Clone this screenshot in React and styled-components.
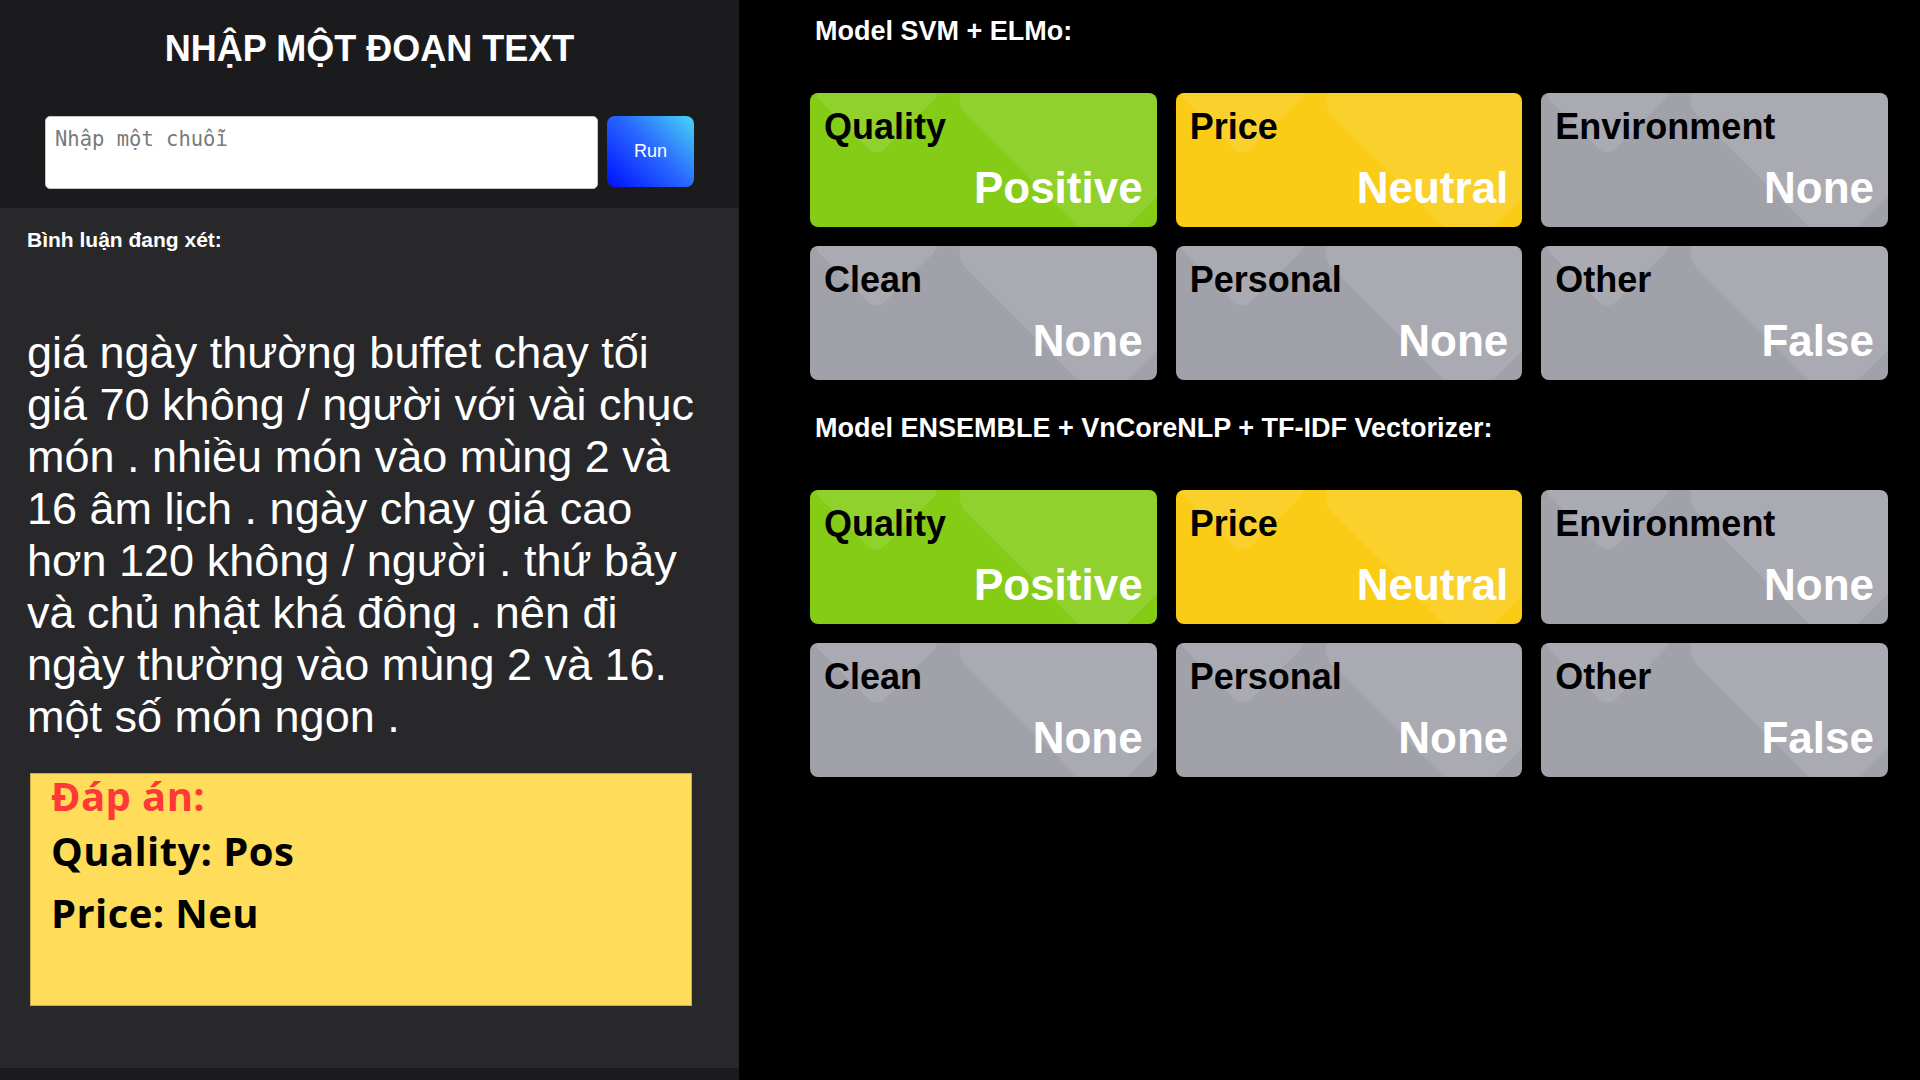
import React from "react";
import styled, { createGlobalStyle } from "styled-components";

const GlobalStyle = createGlobalStyle`
  body {
    margin: 0;
    background: #000;
    font-family: "Liberation Sans", Arial, sans-serif;
  }
`;

const tones = {
  positive: "#84cc16",
  neutral: "#facc15",
  none: "#a1a1aa",
};

const models = [
  {
    name: "Model SVM + ELMo:",
    results: [
      { aspect: "Quality", value: "Positive", tone: "positive" },
      { aspect: "Price", value: "Neutral", tone: "neutral" },
      { aspect: "Environment", value: "None", tone: "none" },
      { aspect: "Clean", value: "None", tone: "none" },
      { aspect: "Personal", value: "None", tone: "none" },
      { aspect: "Other", value: "False", tone: "none" },
    ],
  },
  {
    name: "Model ENSEMBLE + VnCoreNLP + TF-IDF Vectorizer:",
    results: [
      { aspect: "Quality", value: "Positive", tone: "positive" },
      { aspect: "Price", value: "Neutral", tone: "neutral" },
      { aspect: "Environment", value: "None", tone: "none" },
      { aspect: "Clean", value: "None", tone: "none" },
      { aspect: "Personal", value: "None", tone: "none" },
      { aspect: "Other", value: "False", tone: "none" },
    ],
  },
];

const review =
  "giá ngày thường buffet chay tối giá 70 không / người với vài chục món . nhiều món vào mùng 2 và 16 âm lịch . ngày chay giá cao hơn 120 không / người . thứ bảy và chủ nhật khá đông . nên đi ngày thường vào mùng 2 và 16. một số món ngon .";

const App = () => {
  const [text, setText] = React.useState("");

  return (
    <>
      <GlobalStyle />
      <Page>
        <LeftPanel>
          <Header>
            <Title>NHẬP MỘT ĐOẠN TEXT</Title>
            <InputRow>
              <TextInput
                placeholder="Nhập một chuỗi"
                value={text}
                onChange={(e) => setText(e.target.value)}
              />
              <RunButton>Run</RunButton>
            </InputRow>
          </Header>

          <Review>
            <ReviewLabel>Bình luận đang xét:</ReviewLabel>
            <ReviewText>{review}</ReviewText>

            <AnswerBox>
              <AnswerTitle>Đáp án:</AnswerTitle>
              <AnswerLine $space={6}>Quality: Pos</AnswerLine>
              <AnswerLine $space={8}>Price: Neu</AnswerLine>
            </AnswerBox>
          </Review>
        </LeftPanel>

        <RightPanel>
          {models.map((model) => (
            <ModelSection key={model.name}>
              <ModelTitle>{model.name}</ModelTitle>
              <CardGrid>
                {model.results.map((r) => (
                  <Card key={r.aspect} $tone={r.tone}>
                    <CardLabel>{r.aspect}</CardLabel>
                    <CardValue>{r.value}</CardValue>
                  </Card>
                ))}
              </CardGrid>
            </ModelSection>
          ))}
        </RightPanel>
      </Page>
    </>
  );
};

const Page = styled.div`
display: flex;
height: 100vh;
`;

const LeftPanel = styled.div`
width: 739px;
flex-shrink: 0;
display: flex;
flex-direction: column;
padding-bottom: 12px;
box-sizing: border-box;
background-color: #1b1b1e;
`;

const Header = styled.div`
padding: 28px 45px 19px;
`;

const Title = styled.h1`
margin: 0 0 46px;
font-size: 36px;
font-weight: 700;
text-align: center;
color: #fff;
`;

const InputRow = styled.div`
display: flex;
align-items: flex-start;
gap: 9px;
`;

const TextInput = styled.textarea`
flex: 1;
height: 73px;
box-sizing: border-box;
padding: 10px 9px;
border: 1px solid #c3c6cc;
border-radius: 5px;
background: #fff;
resize: none;
font-family: "DejaVu Sans Mono", monospace;
font-size: 20.5px;

&::placeholder {
  color: #7a7a7a;
}
`;

const RunButton = styled.button`
width: 87px;
height: 71px;
border: none;
border-radius: 8px;
background: linear-gradient(45deg, #0010ff 0%, #2a6cff 55%, #48d6f4 100%);
color: #fff;
font-family: "Liberation Sans", Arial, sans-serif;
font-size: 18px;
cursor: pointer;
`;

const Review = styled.div`
flex: 1;
padding: 20px 27px 0;
background-color: #28282b;
`;

const ReviewLabel = styled.h3`
margin: 0;
font-size: 21px;
font-weight: 700;
color: #fff;
`;

const ReviewText = styled.p`
max-width: 685px;
margin: 75px 0 0;
font-size: 45px;
color: #fff;
`;

const AnswerBox = styled.div`
width: 662px;
height: 233px;
margin: 30px 0 0 3px;
padding: 0 20px;
box-sizing: border-box;
border: 1px solid #c9ad45;
background-color: #ffdc5a;
font-family: "Open Sans", "Noto Sans", sans-serif;
font-weight: 700;
letter-spacing: 0.4px;
`;

const AnswerTitle = styled.div`
font-size: 40px;
line-height: 44px;
color: #ff3838;
`;

const AnswerLine = styled.div`
margin-top: ${(props) => props.$space}px;
font-size: 40px;
line-height: 54px;
color: #000;
`;

const RightPanel = styled.div`
flex: 1;
padding: 16px 32px 0 71px;
background-color: #000;
`;

const ModelSection = styled.section`
& + & {
  margin-top: 33px;
}
`;

const ModelTitle = styled.h2`
margin: 0 0 46px;
padding-left: 5px;
font-size: 27px;
line-height: 31px;
font-weight: 700;
color: #fff;
`;

const CardGrid = styled.div`
display: grid;
grid-template-columns: repeat(3, 1fr);
gap: 19px;
`;

const Card = styled.div`
position: relative;
height: 134px;
box-sizing: border-box;
padding: 13px 14px 14px;
display: flex;
flex-direction: column;
justify-content: space-between;
border-radius: 8px;
overflow: hidden;
background-color: ${(props) => tones[props.$tone]};

&::before,
&::after {
  content: "";
  position: absolute;
  background: rgba(255, 255, 255, 0.1);
  transform: rotate(45deg);
}

&::before {
  width: 93px;
  height: 93px;
  left: 20px;
  top: -48px;
  border-radius: 12px;
}

&::after {
  width: 215px;
  height: 215px;
  left: 185px;
  top: -101px;
  border-radius: 22px;
}
`;

const CardLabel = styled.div`
position: relative;
z-index: 1;
font-size: 36px;
font-weight: 700;
color: #000;
`;

const CardValue = styled.div`
position: relative;
z-index: 1;
align-self: flex-end;
font-size: 44px;
font-weight: 700;
color: #fff;
`;

export default App;
